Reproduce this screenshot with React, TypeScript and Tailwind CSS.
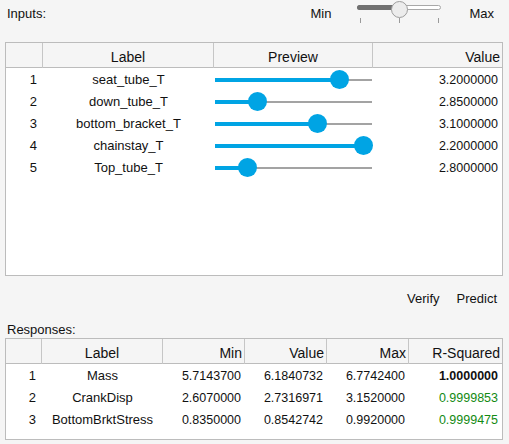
const font = { fontFamily: '"Liberation Sans", Arial, sans-serif' };

const inputs = [
  { label: 'seat_tube_T', pos: 124, value: '3.2000000' },
  { label: 'down_tube_T', pos: 42, value: '2.8500000' },
  { label: 'bottom_bracket_T', pos: 102, value: '3.1000000' },
  { label: 'chainstay_T', pos: 148, value: '2.2000000' },
  { label: 'Top_tube_T', pos: 32, value: '2.8000000' },
];

const responses = [
  { label: 'Mass', min: '5.7143700', value: '6.1840732', max: '6.7742400', r2: '1.0000000', best: true },
  { label: 'CrankDisp', min: '2.6070000', value: '2.7316971', max: '3.1520000', r2: '0.9999853', best: false },
  { label: 'BottomBrktStress', min: '0.8350000', value: '0.8542742', max: '0.9920000', r2: '0.9999475', best: false },
];

function Preview({ pos }: { pos: number }) {
  return (
    <div className="relative h-full w-full">
      <div className="absolute left-0 right-0 top-[10px] h-[2px] bg-[#a3a3a3]" />
      <div className="absolute left-0 top-[9px] h-[4px] bg-[#00a4e4]" style={{ width: pos }} />
      <div
        className="absolute top-[1px] h-[19px] w-[19px] rounded-full bg-[#00a4e4]"
        style={{ left: pos - 9.5 }}
      />
    </div>
  );
}

function TopSlider() {
  return (
    <div className="relative h-[24px] w-[90px]">
      <div className="absolute left-[2px] top-[5px] h-[5px] w-[84px] rounded-full border border-[#a8a8a8] bg-white" />
      <div className="absolute left-[2px] top-[5px] h-[5px] w-[38px] rounded-l-full bg-[#707070]" />
      <div className="absolute left-[36px] top-[1px] h-[17px] w-[17px] rounded-full border border-[#9d9d9d] bg-[#ececec]" />
      <div className="absolute left-[5px] top-[18px] h-[5px] w-px bg-[#9a9a9a]" />
      <div className="absolute left-[44px] top-[18px] h-[5px] w-px bg-[#9a9a9a]" />
      <div className="absolute left-[83px] top-[18px] h-[5px] w-px bg-[#9a9a9a]" />
    </div>
  );
}

export default function App() {
  return (
    <div className="h-[444px] w-[509px] overflow-hidden bg-[#f5f5f5] text-[13px] text-[#111]" style={font}>
      {/* top bar */}
      <div className="flex h-[42px] items-start">
        <span className="ml-[7px] mt-[4px]">Inputs:</span>
        <span className="ml-auto mt-[4px]">Min</span>
        <div className="ml-[24px]">
          <TopSlider />
        </div>
        <span className="ml-[24px] mr-[15px] mt-[4px]">Max</span>
      </div>

      {/* inputs table */}
      <div className="mx-[5px] h-[234px] w-[498px] border border-[#bcbcbc] bg-white">
        <div className="grid h-[25px] grid-cols-[37px_171px_159px_1fr] border-b border-[#bcbcbc] bg-[#f5f5f5] text-[14px]">
          <div className="border-r border-[#c6c6c6]" />
          <div className="flex items-center justify-center border-r border-[#c6c6c6] pt-[4px]">Label</div>
          <div className="flex items-center justify-center border-r border-[#c6c6c6] pt-[4px]">Preview</div>
          <div className="flex items-center justify-end pr-[2px] pt-[4px]">Value</div>
        </div>
        {inputs.map((r, i) => (
          <div key={r.label} className="grid h-[22px] grid-cols-[37px_171px_159px_1fr] items-center pt-[2px]">
            <div className="pr-[6px] text-right">{i + 1}</div>
            <div className="text-center">{r.label}</div>
            <div className="-mt-[2px] h-full pl-[1px] pr-[1px]">
              <Preview pos={r.pos} />
            </div>
            <div className="pr-[4px] text-right text-[12.5px]">{r.value}</div>
          </div>
        ))}
      </div>

      {/* actions */}
      <div className="flex h-[47px] items-center justify-end gap-[17px] pb-[1px] pr-[12px]">
        <span>Verify</span>
        <span>Predict</span>
      </div>

      <div className="ml-[7px] h-[14px] leading-[14px]">Responses:</div>

      {/* responses table */}
      <div className="mx-[5px] mt-[1px] h-[102px] w-[498px] border border-[#bcbcbc] bg-white">
        <div className="grid h-[25px] grid-cols-[36px_121px_82px_82px_82px_1fr] border-b border-[#bcbcbc] bg-[#f5f5f5] text-[14px]">
          <div className="border-r border-[#c6c6c6]" />
          <div className="flex items-center justify-center border-r border-[#c6c6c6] pt-[4px]">Label</div>
          <div className="flex items-center justify-end border-r border-[#c6c6c6] pr-[2px] pt-[4px]">Min</div>
          <div className="flex items-center justify-end border-r border-[#c6c6c6] pr-[2px] pt-[4px]">Value</div>
          <div className="flex items-center justify-end border-r border-[#c6c6c6] pr-[2px] pt-[4px]">Max</div>
          <div className="flex items-center justify-end pr-[2px] pt-[4px]">R-Squared</div>
        </div>
        {responses.map((r, i) => (
          <div key={r.label} className="grid h-[22px] grid-cols-[36px_121px_82px_82px_82px_1fr] items-center pt-[2px]">
            <div className="pr-[6px] text-right">{i + 1}</div>
            <div className="text-center">{r.label}</div>
            <div className="pr-[4px] text-right text-[12.5px]">{r.min}</div>
            <div className="pr-[4px] text-right text-[12.5px]">{r.value}</div>
            <div className="pr-[4px] text-right text-[12.5px]">{r.max}</div>
            <div className={r.best ? 'pr-[4px] text-right text-[12.5px] font-bold' : 'pr-[4px] text-right text-[12.5px] text-[#138a13]'}>{r.r2}</div>
          </div>
        ))}
      </div>
    </div>
  );
}
